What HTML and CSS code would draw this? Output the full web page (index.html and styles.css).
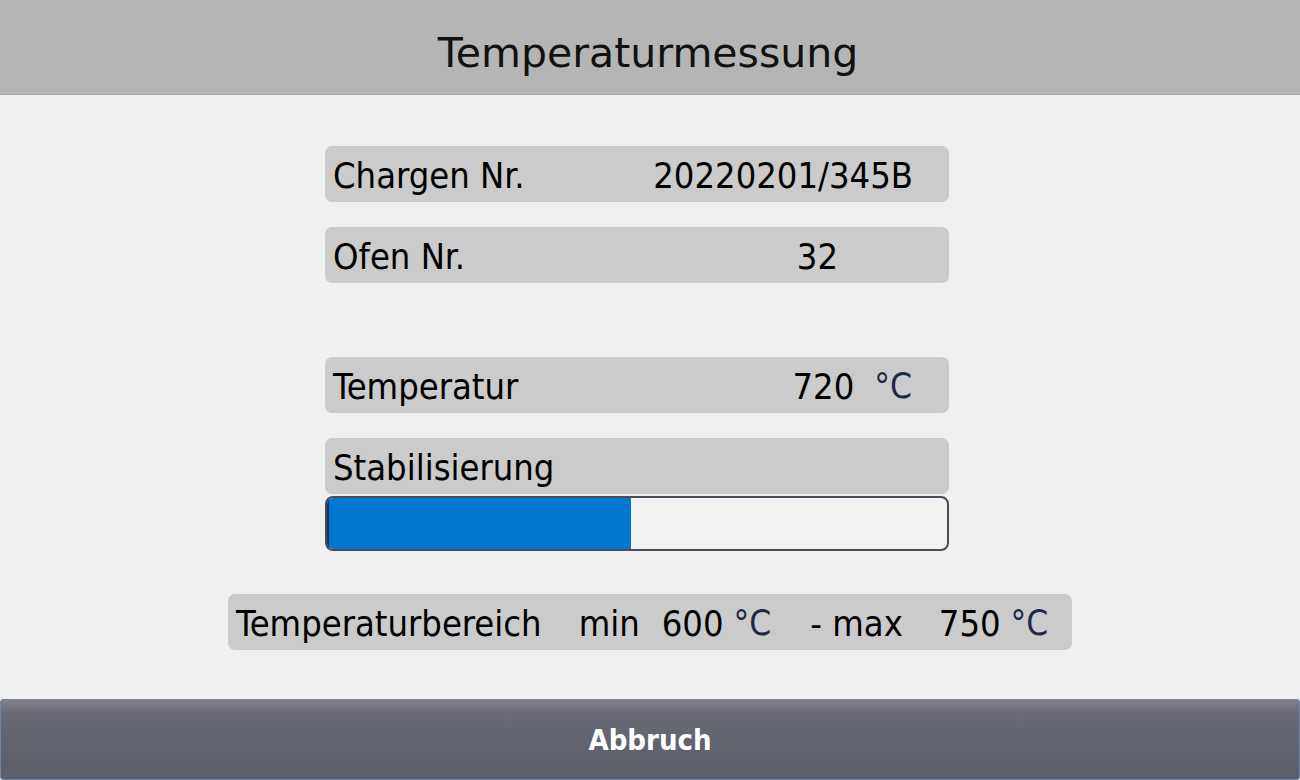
FILE: index.html
```html
<!DOCTYPE html>
<html lang="de">
<head>
  <meta charset="UTF-8">
  <title>Temperaturmessung</title>
  <meta name="viewport" content="width=device-width, initial-scale=1.0">
  <link rel="stylesheet" href="styles.css">
</head>
<body>
  <header class="title-bar">Temperaturmessung</header>

  <main class="content">
    <div class="stack">
      <div class="row">
        <span class="label">Chargen Nr.</span>
        <span class="value value-charge">20220201/345B</span>
      </div>
      <div class="row">
        <span class="label">Ofen Nr.</span>
        <span class="value value-ofen">32</span>
      </div>

      <div class="row row-temp">
        <span class="label">Temperatur</span>
        <span class="value">720</span>
        <span class="unit unit-temp">°C</span>
      </div>
      <div class="row row-stab">
        <span class="label">Stabilisierung</span>
      </div>
      <div class="progress">
        <div class="progress-fill" style="width: 49%"></div>
      </div>
    </div>

    <div class="row range">
      <span class="label">Temperaturbereich</span>
      <span class="r-min">min</span>
      <span class="r-num">600</span>
      <span class="unit">°C</span>
      <span class="r-max">- max</span>
      <span class="r-num r-num-max">750</span>
      <span class="unit">°C</span>
    </div>
  </main>

  <button class="cancel-btn" type="button">Abbruch</button>
</body>
</html>
```

FILE: styles.css
```css
html, body { margin:0; padding:0; }
body { width:1300px; height:780px; background:#f0f0f0; font-family:"DejaVu Sans Condensed", "DejaVu Sans", sans-serif; color:#000; display:flex; flex-direction:column; overflow:hidden; }

/* Kopfzeile */
.title-bar { height:96px; background:#b5b5b5; border-bottom:1px solid #a9a9a9; box-sizing:border-box; display:flex; align-items:center; justify-content:center; font-family:"DejaVu Sans", sans-serif; font-size:41px; padding-top:12px; padding-right:4px; color:#111; }

/* Inhalt */
.content { flex:1; display:flex; flex-direction:column; align-items:center; padding-top:51px; }
.stack { width:624px; margin-right:26px; display:flex; flex-direction:column; }

.row { height:56px; background:#cbcbcb; border-radius:7px; display:flex; align-items:center; padding:2px 0 0 8px; box-sizing:border-box; font-size:36px; white-space:nowrap; }
.row + .row { margin-top:25px; }
.stack .row-temp { margin-top:74px; }
.label { flex:1; }
.value-charge { margin-right:36px; }
.value-ofen { margin-right:111px; }
.unit { color:#1f2946; font-size:35px; }
.unit-temp { margin-left:20px; margin-right:37px; }

/* Fortschritt */
.progress { margin-top:2px; height:55px; border:2px solid #484c5a; border-radius:8px; background:#f2f2f2; box-sizing:border-box; overflow:hidden; }
.progress-fill { height:100%; background:#0078cf; border-left:2px solid #14355a; box-sizing:border-box; }

/* Temperaturbereich */
.range { margin-top:43px; width:844px; padding-left:8px; }
.range .label { flex:none; }
.r-min { margin-left:37px; }
.r-num { margin-left:22px; margin-right:10px; }
.r-max { margin-left:39px; }
.r-num-max { margin-left:36px; margin-right:10px; }

/* Abbruch */
.cancel-btn { margin-top:49px; height:81px; width:100%; border:1px solid #6d85ac; border-radius:3px; background:linear-gradient(#82808c 0, #6a6b77 12px, #62646f 50%, #5b5d69 100%); color:#fff; font-family:"DejaVu Sans Condensed", "DejaVu Sans", sans-serif; font-weight:bold; font-size:29px; cursor:pointer; flex:none; }
```
